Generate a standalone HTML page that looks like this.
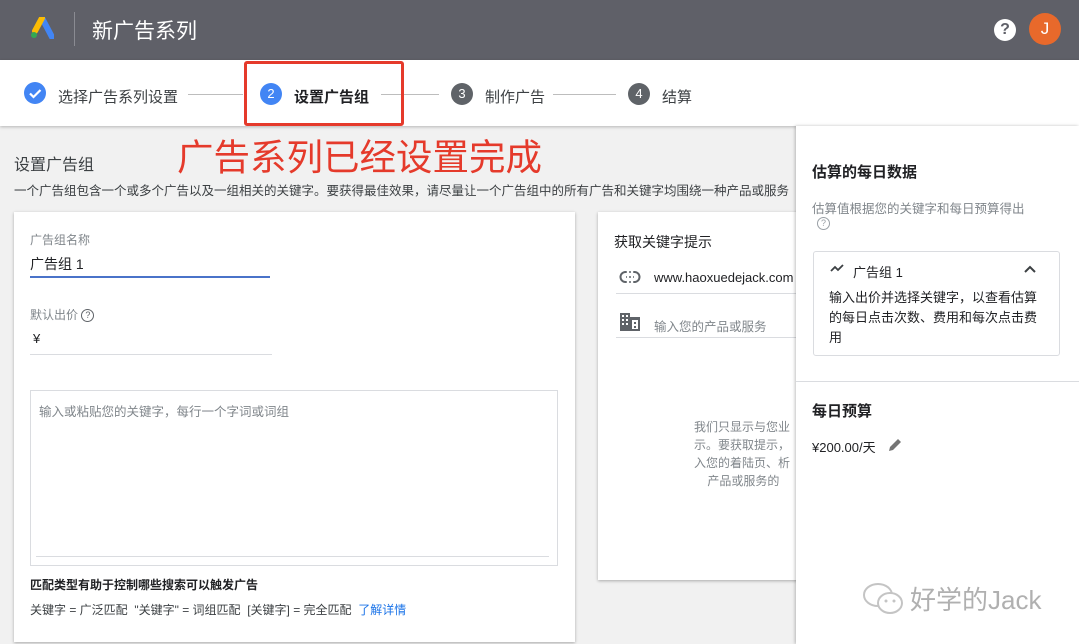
<!DOCTYPE html>
<html><head><meta charset="utf-8"><style>
*{margin:0;padding:0;box-sizing:border-box}
body{width:1079px;height:644px;overflow:hidden;background:#f1f1f1;font-family:"Liberation Sans","Noto Sans CJK SC",sans-serif;position:relative;color:#202124}
.a{position:absolute}
.hdr{left:0;top:0;width:1079px;height:60px;background:#5f6068}
.step{top:60px;left:0;width:1079px;height:66px;background:#fff;box-shadow:0 1px 3px rgba(0,0,0,.25)}
.circ{width:22px;height:22px;border-radius:50%;color:#fff;font-size:13px;text-align:center;line-height:22px}
.line{height:1px;background:#bdbdbd}
.st{font-size:15px;color:#3c4043}
.card{background:#fff;box-shadow:0 1px 3px rgba(0,0,0,.3)}
</style></head><body>
<div class="a hdr"></div>
<svg class="a" style="left:30px;top:17px" width="24" height="22" viewBox="0 0 24 22"><path d="M12 1 L22 20" stroke="#4285f4" stroke-width="6" stroke-linecap="round"/><path d="M12 1 L5 14" stroke="#fbbc04" stroke-width="6" stroke-linecap="round"/><circle cx="4" cy="18" r="3" fill="#34a853"/></svg>
<div class="a" style="left:74px;top:12px;width:1px;height:34px;background:#8a8b92"></div>
<div class="a" style="left:92px;top:15px;color:#fff;font-size:21px">新广告系列</div>
<div class="a" style="left:994px;top:19px;width:22px;height:22px;border-radius:50%;background:#fff;color:#5f6068;font-weight:bold;font-size:16px;text-align:center;line-height:22px">?</div>
<div class="a" style="left:1029px;top:13px;width:32px;height:32px;border-radius:50%;background:#e8692b;color:#fff;font-size:17px;text-align:center;line-height:32px">J</div>

<div class="a step"></div>
<div class="a circ" style="left:24px;top:82px;background:#4285f4"><svg width="22" height="22"><path d="M6 11.5l3.5 3.5 7-7" stroke="#fff" stroke-width="2.2" fill="none"/></svg></div>
<div class="a st" style="left:58px;top:86px">选择广告系列设置</div>
<div class="a line" style="left:188px;top:94px;width:55px"></div>
<div class="a circ" style="left:260px;top:83px;background:#4285f4">2</div>
<div class="a st" style="left:294px;top:86px;color:#202124;font-weight:bold">设置广告组</div>
<div class="a line" style="left:381px;top:94px;width:58px"></div>
<div class="a circ" style="left:451px;top:83px;background:#5f6368">3</div>
<div class="a st" style="left:485px;top:86px">制作广告</div>
<div class="a line" style="left:553px;top:94px;width:63px"></div>
<div class="a circ" style="left:628px;top:83px;background:#5f6368">4</div>
<div class="a st" style="left:662px;top:86px">结算</div>
<div class="a" style="left:244px;top:61px;width:160px;height:65px;border:3px solid #e53a2b;border-radius:3px"></div>

<div class="a" style="left:177px;top:128px;color:#e53a2b;font-size:36.5px;white-space:nowrap">广告系列已经设置完成</div>
<div class="a" style="left:14px;top:151px;font-size:16px;color:#3c4043">设置广告组</div>
<div class="a" style="left:14px;top:180px;font-size:12.5px;color:#3c4043;white-space:nowrap;width:782px;overflow:hidden">一个广告组包含一个或多个广告以及一组相关的关键字。要获得最佳效果，请尽量让一个广告组中的所有广告和关键字均围绕一种产品或服务</div>

<div class="a card" style="left:14px;top:212px;width:561px;height:430px"></div>
<div class="a" style="left:30px;top:231px;font-size:12px;color:#80868b">广告组名称</div>
<div class="a" style="left:30px;top:254px;font-size:14px">广告组 1</div>
<div class="a" style="left:30px;top:276px;width:240px;height:2px;background:#4a73c9"></div>
<div class="a" style="left:30px;top:306px;font-size:12px;color:#80868b">默认出价 <span style="display:inline-block;width:13px;height:13px;border:1.5px solid #5f6368;border-radius:50%;font-size:9px;text-align:center;line-height:10px;color:#5f6368;vertical-align:middle">?</span></div>
<div class="a" style="left:33px;top:331px;font-size:13px">¥</div>
<div class="a" style="left:30px;top:354px;width:242px;height:1px;background:#dadce0"></div>
<div class="a" style="left:30px;top:390px;width:528px;height:176px;border:1px solid #dadce0"></div>
<div class="a" style="left:36px;top:556px;width:513px;height:1px;background:#dadce0"></div>
<div class="a" style="left:39px;top:401px;font-size:12.5px;color:#80868b">输入或粘贴您的关键字，每行一个字词或词组</div>
<div class="a" style="left:30px;top:576px;font-size:12px;font-weight:bold">匹配类型有助于控制哪些搜索可以触发广告</div>
<div class="a" style="left:30px;top:601px;font-size:12px;color:#3c4043;white-space:nowrap">关键字 = 广泛匹配 &nbsp;"关键字" = 词组匹配 &nbsp;[关键字] = 完全匹配 &nbsp;<span style="color:#1a73e8">了解详情</span></div>

<div class="a card" style="left:598px;top:212px;width:210px;height:368px"></div>
<div class="a" style="left:614px;top:232px;font-size:14px">获取关键字提示</div>
<svg class="a" style="left:619px;top:270px" width="22" height="14" viewBox="0 0 22 14"><rect x="1.5" y="2" width="19" height="10" rx="5" fill="none" stroke="#5f6368" stroke-width="2"/><path d="M7 7h8" stroke="#5f6368" stroke-width="2"/><path d="M9 1v12" stroke="#fff" stroke-width="2.5"/><path d="M13 1v12" stroke="#fff" stroke-width="2.5"/></svg>
<div class="a" style="left:654px;top:270px;font-size:13px">www.haoxuedejack.com</div>
<div class="a" style="left:616px;top:293px;width:190px;height:1px;background:#dadce0"></div>
<svg class="a" style="left:620px;top:313px" width="20" height="18" viewBox="0 0 20 18"><path d="M0 0h10v4h10v14H0z" fill="#5f6368"/><g fill="#fff"><rect x="2" y="2" width="2" height="2"/><rect x="6" y="2" width="2" height="2"/><rect x="2" y="6" width="2" height="2"/><rect x="6" y="6" width="2" height="2"/><rect x="2" y="10" width="2" height="2"/><rect x="6" y="10" width="2" height="2"/><rect x="12" y="7" width="6" height="9"/></g><rect x="14" y="9" width="2" height="2" fill="#5f6368"/><rect x="14" y="13" width="2" height="2" fill="#5f6368"/></svg>
<div class="a" style="left:654px;top:316px;font-size:12.5px;color:#80868b">输入您的产品或服务</div>
<div class="a" style="left:616px;top:337px;width:190px;height:1px;background:#dadce0"></div>
<div class="a" style="left:694px;top:418px;font-size:12px;color:#80868b;line-height:18px;white-space:nowrap">我们只显示与您业<br>示。要获取提示，<br>入您的着陆页、析<br>&nbsp;&nbsp;&nbsp;&nbsp;产品或服务的</div>

<div class="a" style="left:796px;top:126px;width:283px;height:518px;background:#fff;box-shadow:-1px 0 3px rgba(0,0,0,.25)"></div>
<div class="a" style="left:812px;top:161px;font-size:15px;font-weight:bold">估算的每日数据</div>
<div class="a" style="left:812px;top:198px;font-size:12.5px;color:#80868b">估算值根据您的关键字和每日预算得出</div>
<div class="a" style="left:817px;top:217px;width:13px;height:13px;border:1px solid #9aa0a6;border-radius:50%;font-size:9px;color:#9aa0a6;text-align:center;line-height:11px">?</div>
<div class="a" style="left:813px;top:251px;width:247px;height:105px;border:1px solid #dadce0;border-radius:3px"></div>
<svg class="a" style="left:830px;top:263px" width="14" height="10"><path d="M1 8l4-4 3 3 5-5" stroke="#3c4043" stroke-width="1.8" fill="none"/></svg>
<div class="a" style="left:853px;top:262px;font-size:13px">广告组 1</div>
<svg class="a" style="left:1024px;top:265px" width="12" height="8"><path d="M1 7l5-5 5 5" stroke="#3c4043" stroke-width="2" fill="none"/></svg>
<div class="a" style="left:829px;top:288px;font-size:13px;line-height:20px;width:210px">输入出价并选择关键字，以查看估算的每日点击次数、费用和每次点击费用</div>
<div class="a" style="left:796px;top:381px;width:283px;height:1px;background:#dadce0"></div>
<div class="a" style="left:812px;top:400px;font-size:15px;font-weight:bold">每日预算</div>
<div class="a" style="left:812px;top:437px;font-size:13px">¥200.00/天</div>
<svg class="a" style="left:887px;top:437px" width="16" height="16"><path d="M2 14l1-4 8-8 3 3-8 8z" fill="#757575"/></svg>
<svg class="a" style="left:862px;top:582px" width="44" height="34" viewBox="0 0 44 34"><ellipse cx="16" cy="13" rx="14" ry="11" fill="none" stroke="#c4c4c4" stroke-width="2"/><ellipse cx="28" cy="21" rx="12" ry="10" fill="#fff" stroke="#c4c4c4" stroke-width="2"/><circle cx="24" cy="19" r="1.5" fill="#c4c4c4"/><circle cx="32" cy="19" r="1.5" fill="#c4c4c4"/></svg>
<div class="a" style="left:910px;top:580px;font-size:26px;color:#b0b0b0">好学的Jack</div>
</body></html>
